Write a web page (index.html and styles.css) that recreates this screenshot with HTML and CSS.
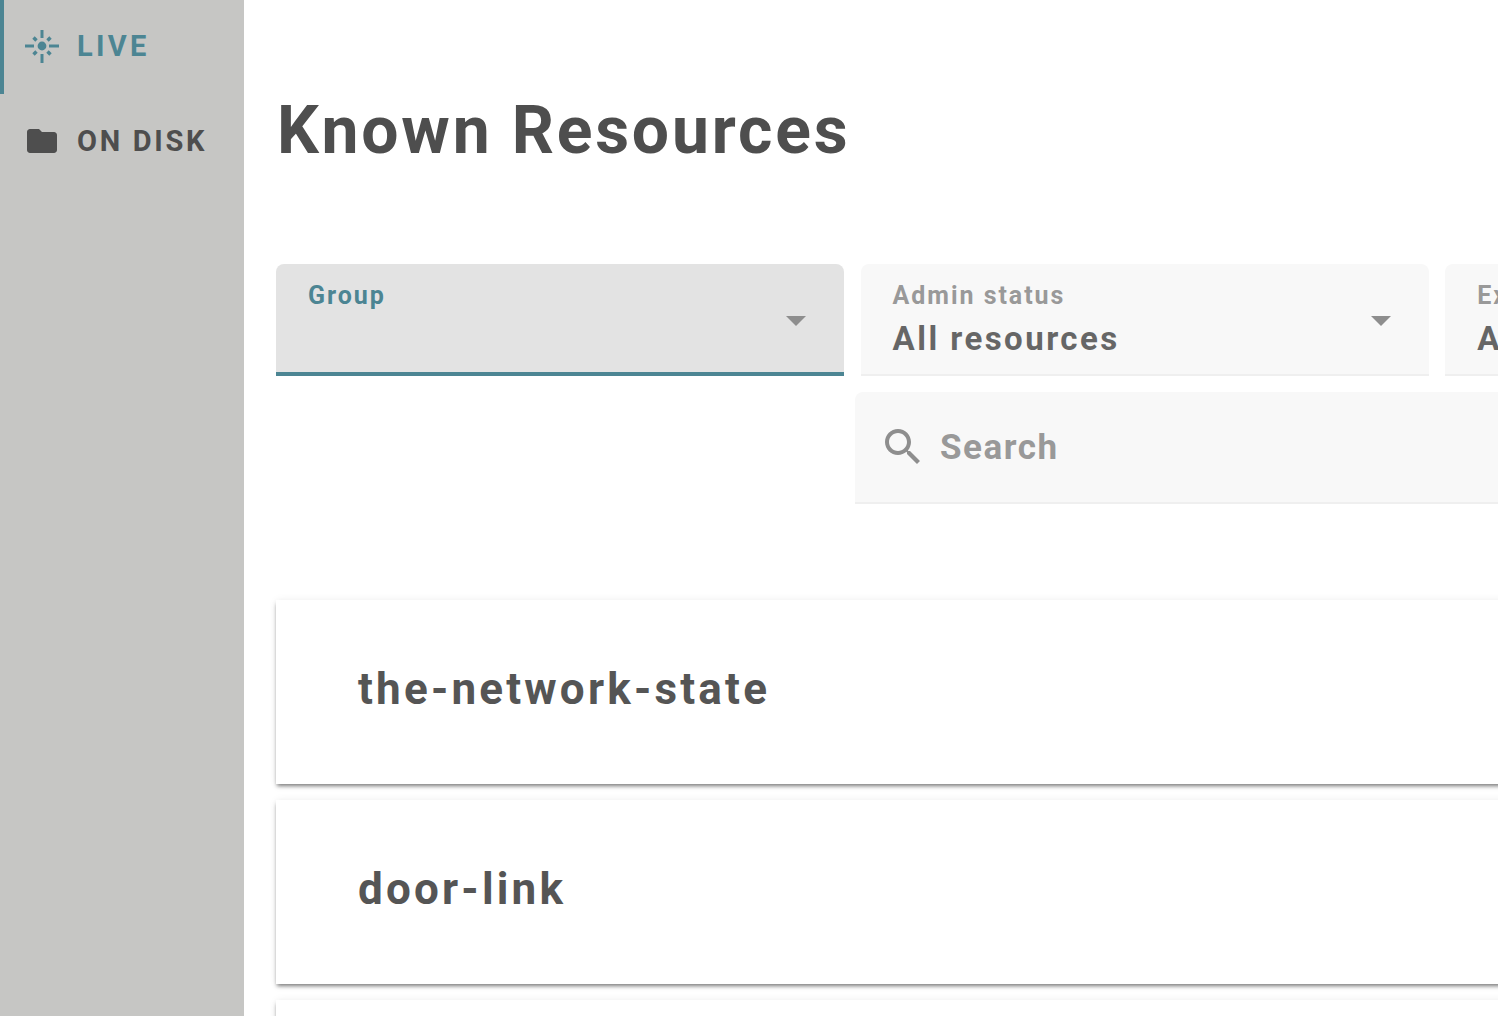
FILE: index.html
```html
<!DOCTYPE html>
<html lang="en">
<head>
    <meta charset="UTF-8">
    <title>Known Resources</title>
    <link rel="stylesheet" href="styles.css">
</head>
<body>
    <nav class="sidebar">
        <a class="nav-item active">
            <svg class="nav-icon" viewBox="0 0 36 36">
                <circle cx="18" cy="18" r="4.4" fill="currentColor"/>
                <path d="M18 2v8M18 26v9M1 18h9M25 18h10" stroke="currentColor" stroke-width="3" fill="none"/>
                <path d="M9.500 9.500l3 3M23.500 23.500l3 3M26.500 9.500l-3 3M12.500 23.500l-3 3" stroke="currentColor" stroke-width="3.400" fill="none"/>
            </svg>
            <span>LIVE</span>
        </a>
        <a class="nav-item">
            <svg class="nav-icon" viewBox="0 0 24 24"><path fill="currentColor" d="M10 4H4c-1.100 0-2 .9-2 2v12c0 1.100.9 2 2 2h16c1.100 0 2-.9 2-2V8c0-1.100-.9-2-2-2h-8l-2-2z"/></svg>
            <span>ON DISK</span>
        </a>
    </nav>
    <main class="main-content">
        <h1 class="page-title">Known Resources</h1>
        <div class="filters">
            <div class="field focused">
                <label>Group</label>
                <svg class="caret" viewBox="0 0 24 24"><path fill="currentColor" d="M7 10l5 5 5-5z"/></svg>
            </div>
            <div class="field">
                <label>Admin status</label>
                <div class="value">All resources</div>
                <svg class="caret" viewBox="0 0 24 24"><path fill="currentColor" d="M7 10l5 5 5-5z"/></svg>
            </div>
            <div class="field">
                <label>Exported</label>
                <div class="value">All</div>
            </div>
        </div>
        <div class="search">
            <svg class="search-icon" viewBox="0 0 24 24"><path fill="currentColor" d="M15.500 14h-.79l-.28-.27C15.410 12.590 16 11.110 16 9.500 16 5.910 13.090 3 9.500 3S3 5.910 3 9.500 5.910 16 9.500 16c1.610 0 3.090-.59 4.230-1.570l.27.28v.79l5 4.990L20.490 19l-4.990-5zm-6 0C7.010 14 5 11.990 5 9.500S7.010 5 9.500 5 14 7.010 14 9.500 11.990 14 9.500 14z"/></svg>
            <span>Search</span>
        </div>
        <div class="card-list">
            <div class="card"><h2>the-network-state</h2></div>
            <div class="card"><h2>door-link</h2></div>
            <div class="card"></div>
        </div>
    </main>
</body>
</html>
```

FILE: styles.css
```css
* {
    margin: 0;
    padding: 0;
    box-sizing: border-box;
}
html, body {
    height: 100%;
    overflow: hidden;
}
body {
    display: flex;
    background: white;
    color: #4e4e4e;
    font-family: Roboto, "Liberation Sans", sans-serif;
}
.sidebar {
    width: 244px;
    flex-shrink: 0;
    background-color: #c6c6c4;
}
.nav-item {
    height: 94px;
    display: flex;
    align-items: center;
    gap: 17px;
    padding-left: 24px;
    font-size: 29px;
    font-weight: bold;
    letter-spacing: 2.700px;
    color: #4e4e4e;
}
.nav-item.active {
    color: #4c8593;
    border-left: 4px solid #4c8593;
    padding-left: 20px;
    padding-bottom: 2px;
    letter-spacing: 3.300px;
}
.nav-icon {
    width: 36px;
    height: 36px;
}
.main-content {
    flex: 1;
    min-width: 0;
    padding-left: 32px;
}
.page-title {
    font-size: 66px;
    font-weight: bold;
    letter-spacing: 2.800px;
    line-height: 76px;
    margin-top: 93px;
    margin-left: 1px;
    margin-bottom: 95px;
}
.filters {
    display: flex;
    gap: 16.200px;
}
.field {
    position: relative;
    flex: 0 0 568.400px;
    height: 112px;
    padding: 17px 32px 0;
    background-color: #f8f8f8;
    border-bottom: 2px solid #efefef;
    border-radius: 8px 8px 0 0;
}
.field label {
    display: block;
    font-size: 25px;
    line-height: 30px;
    letter-spacing: 1.950px;
    font-weight: bold;
    color: #999;
}
.field .value {
    font-size: 33px;
    line-height: 44px;
    margin-top: 6px;
    font-weight: bold;
    letter-spacing: 2.450px;
    color: #666;
}
.field.focused {
    background-color: #e3e3e3;
    border-bottom: 4px solid #4c8593;
}
.field.focused label {
    color: #4c8593;
}
.caret {
    position: absolute;
    right: 24px;
    top: 32px;
    width: 48px;
    height: 48px;
    color: #8e8e8e;
}
.search {
    display: flex;
    align-items: center;
    gap: 13px;
    width: 700px;
    height: 112px;
    margin-top: 16px;
    margin-left: 579px;
    padding-left: 24px;
    background-color: #f8f8f8;
    border-bottom: 2px solid #efefef;
    border-radius: 8px 8px 0 0;
    font-size: 35px;
    font-weight: bold;
    letter-spacing: 1.500px;
    color: #999;
}
.search-icon {
    width: 48px;
    height: 48px;
    color: #8e8e8e;
}
.card-list {
    margin-top: 96px;
    display: flex;
    flex-direction: column;
    gap: 16px;
    width: 1400px;
}
.card {
    height: 184px;
    flex-shrink: 0;
    display: flex;
    align-items: center;
    padding: 0 0 6px 82px;
    background: white;
    box-shadow: 0 3px 4px -1px rgba(0, 0, 0, 0.5), 0 0 8px rgba(0, 0, 0, 0.06);
}
.card h2 {
    font-size: 44px;
    font-weight: bold;
    letter-spacing: 3.200px;
    color: #555;
}
```
